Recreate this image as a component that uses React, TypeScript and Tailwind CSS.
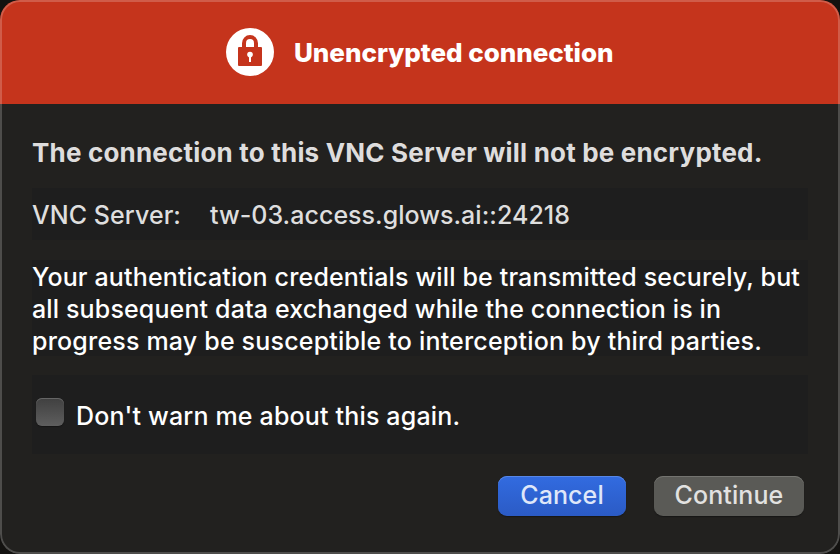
import React from "react";

function LockBadge() {
  return (
    <svg className="size-12 shrink-0" viewBox="0 0 48 48" aria-hidden="true">
      <circle cx="24" cy="24" r="24" fill="#fff" />
      <path d="M18 21V15.2a6 6.2 0 0 1 12 0V21" fill="none" stroke="#c5341c" strokeWidth="4" />
      <rect x="12" y="19" width="24" height="19" rx="1" fill="#c5341c" />
      <circle cx="24" cy="26.6" r="2.8" fill="#fff" />
      <rect x="23" y="27" width="2" height="7" fill="#fff" />
    </svg>
  );
}

export default function App() {
  return (
    <div className="h-[554px] w-[840px] overflow-hidden bg-[#131210] font-['Inter','Liberation_Sans',sans-serif] whitespace-nowrap">
      <main className="relative flex h-full w-full flex-col overflow-hidden rounded-[20px] bg-[#22211f]">
        <header className="flex h-[104px] shrink-0 items-center gap-5 bg-[#c5341c] pl-[226px]">
          <LockBadge />
          <h1 className="pt-0.5 text-[26px] leading-8 font-extrabold tracking-[-0.03px] text-white">Unencrypted connection</h1>
        </header>
        <div className="flex flex-col px-8 pt-[33px]">
          <h2 className="text-[26px] leading-8 font-bold tracking-[0.19px] text-[#dedddd]">
            The connection to this VNC Server will not be encrypted.
          </h2>
          <div className="mt-[19px] flex h-[52px] items-center bg-[#1e1e1e] pt-0.5 text-[25px] leading-8 font-medium text-[#dedede]">
            <span className="w-[178px] tracking-[0.06px]">VNC Server:</span>
            <span className="tracking-[0.03px]">tw-03.access.glows.ai::24218</span>
          </div>
          <p className="mt-5 flex h-24 flex-col bg-[#1e1e1e] pt-px text-[25px] leading-8 font-medium text-white">
            <span className="tracking-[0.155px]">Your authentication credentials will be transmitted securely, but</span>
            <span className="tracking-[0.14px]">all subsequent data exchanged while the connection is in</span>
            <span className="tracking-[0.19px]">progress may be susceptible to interception by third parties.</span>
          </p>
          <label className="mt-[19px] flex h-[79px] items-center bg-[#1e1e1e] pl-1 text-[25px] leading-8 font-medium text-white">
            <span className="mb-[5px] size-7 rounded-[6px] bg-linear-to-b from-[#404040] to-[#5e5e5e] shadow-[inset_0_1px_0_#666,0_1px_1px_#151515]" />
            <span className="ml-3 pt-0.5 tracking-[0.17px]">Don't warn me about this again.</span>
          </label>
          <div className="mt-[22px] flex justify-end gap-7 pr-1 text-[25px] leading-8 font-medium">
            <button className="h-10 w-32 rounded-[9px] bg-linear-to-b from-[#326be0] to-[#2b5bc5] pb-[3px] text-[#dfe7f9] shadow-[inset_0_1px_0_#5787e6,0_1px_1px_#171716]">
              <span className="tracking-[0.1px]">Cancel</span>
            </button>
            <button className="h-10 w-[150px] rounded-[9px] bg-[#5a5a56] pb-[3px] text-[#e2e2e1] shadow-[inset_0_1px_0_#747470,0_1px_1px_#171716]">
              <span className="tracking-[0.1px]">Continue</span>
            </button>
          </div>
        </div>
        <div className="pointer-events-none absolute inset-0 rounded-[20px] border-2 border-white/20" />
      </main>
    </div>
  );
}
